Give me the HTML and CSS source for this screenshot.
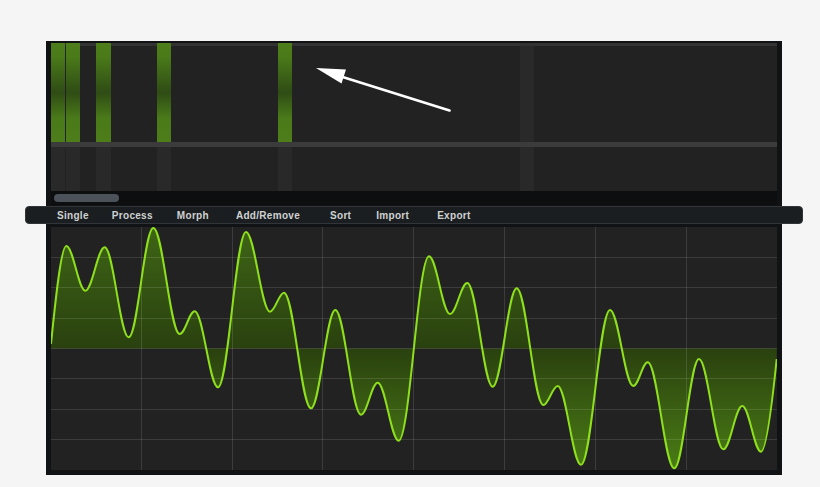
FILE: index.html
```html
<!DOCTYPE html>
<html>
<head>
<meta charset="utf-8">
<link rel="stylesheet" href="styles.css">
</head>
<body>
<div class="panel">
  <div class="harmonics">
    <div class="bar k1"></div>
    <div class="bar k2"></div>
    <div class="bar k4"></div>
    <div class="bar k8"></div>
    <div class="bar k16"></div>
    <div class="ghost k32"></div>
    <div class="sep"></div>
    <div class="cell k1"></div>
    <div class="cell k2"></div>
    <div class="cell k4"></div>
    <div class="cell k8"></div>
    <div class="cell k16"></div>
    <div class="cell k32"></div>
  </div>
  <div class="scroll"><div class="thumb"></div></div>
  <nav class="toolbar">
    <span class="tb-single">Single</span>
    <span class="tb-process">Process</span>
    <span class="tb-morph">Morph</span>
    <span class="tb-add">Add/Remove</span>
    <span class="tb-sort">Sort</span>
    <span class="tb-import">Import</span>
    <span class="tb-export">Export</span>
  </nav>
  <div class="wave">
    <svg width="726" height="243" viewBox="51 227 726 243">
      <defs>
        <linearGradient id="wfill" gradientUnits="userSpaceOnUse" x1="0" y1="227" x2="0" y2="470">
          <stop offset="0" stop-color="#3e6516"/>
          <stop offset="0.5" stop-color="#2a410f"/>
          <stop offset="1" stop-color="#4a7d15"/>
        </linearGradient>
      </defs>
      <path class="fill" d="M51 344 C54.5 310 60.7 246 66.3 246 C73.2 246 78.4 290.7 85.3 290.7 C92.4 290.7 97.6 247.3 104.7 247.3 C113.4 247.3 120 337.3 128.7 337.3 C137.7 337.3 144.3 228 153.3 228 C162.9 228 170.1 334 179.7 334 C185.2 334 189.2 311.3 194.7 311.3 C203.2 311.3 209.5 387.3 218 387.3 C228.2 387.3 235.8 232 246 232 C254.7 232 261.3 311.7 270 311.7 C275.1 311.7 278.9 292.7 284 292.7 C293.8 292.7 301.2 408.3 311 408.3 C319.8 408.3 326.5 310 335.3 310 C344.7 310 351.6 414.7 361 414.7 C367.1 414.7 371.6 382.7 377.7 382.7 C385.3 382.7 391.1 440.7 398.7 440.7 C409.7 440.7 418 256.3 429 256.3 C436.6 256.3 442.4 314 450 314 C456.3 314 461 283 467.3 283 C476.5 283 483.5 386.7 492.7 386.7 C501.4 386.7 508 288.3 516.7 288.3 C526.4 288.3 533.6 405 543.3 405 C548.5 405 552.5 386 557.7 386 C566.2 386 572.5 464.7 581 464.7 C591.6 464.7 599.4 310 610 310 C618.5 310 624.8 386 633.3 386 C638.5 386 642.5 362.3 647.7 362.3 C657.4 362.3 664.6 468.3 674.3 468.3 C683.3 468.3 690 359 699 359 C707.8 359 714.5 449.3 723.3 449.3 C730.2 449.3 735.4 406 742.3 406 C749.1 406 754.2 451.7 761 451.7 C766.7 451.7 773 395 776.7 359 L776.7 348.5 L51 348.5 Z"/>
      <g class="grid">
        <line x1="141.5" y1="227" x2="141.5" y2="470"/>
        <line x1="232.5" y1="227" x2="232.5" y2="470"/>
        <line x1="322.5" y1="227" x2="322.5" y2="470"/>
        <line x1="413.5" y1="227" x2="413.5" y2="470"/>
        <line x1="504.5" y1="227" x2="504.5" y2="470"/>
        <line x1="595.5" y1="227" x2="595.5" y2="470"/>
        <line x1="686.5" y1="227" x2="686.5" y2="470"/>
        <line x1="51" y1="257.5" x2="777" y2="257.5"/>
        <line x1="51" y1="287.5" x2="777" y2="287.5"/>
        <line x1="51" y1="318.5" x2="777" y2="318.5"/>
        <line x1="51" y1="348.5" x2="777" y2="348.5"/>
        <line x1="51" y1="378.5" x2="777" y2="378.5"/>
        <line x1="51" y1="409.5" x2="777" y2="409.5"/>
        <line x1="51" y1="439.5" x2="777" y2="439.5"/>
      </g>
      <path class="line" d="M51 344 C54.5 310 60.7 246 66.3 246 C73.2 246 78.4 290.7 85.3 290.7 C92.4 290.7 97.6 247.3 104.7 247.3 C113.4 247.3 120 337.3 128.7 337.3 C137.7 337.3 144.3 228 153.3 228 C162.9 228 170.1 334 179.7 334 C185.2 334 189.2 311.3 194.7 311.3 C203.2 311.3 209.5 387.3 218 387.3 C228.2 387.3 235.8 232 246 232 C254.7 232 261.3 311.7 270 311.7 C275.1 311.7 278.9 292.7 284 292.7 C293.8 292.7 301.2 408.3 311 408.3 C319.8 408.3 326.5 310 335.3 310 C344.7 310 351.6 414.7 361 414.7 C367.1 414.7 371.6 382.7 377.7 382.7 C385.3 382.7 391.1 440.7 398.7 440.7 C409.7 440.7 418 256.3 429 256.3 C436.6 256.3 442.4 314 450 314 C456.3 314 461 283 467.3 283 C476.5 283 483.5 386.7 492.7 386.7 C501.4 386.7 508 288.3 516.7 288.3 C526.4 288.3 533.6 405 543.3 405 C548.5 405 552.5 386 557.7 386 C566.2 386 572.5 464.7 581 464.7 C591.6 464.7 599.4 310 610 310 C618.5 310 624.8 386 633.3 386 C638.5 386 642.5 362.3 647.7 362.3 C657.4 362.3 664.6 468.3 674.3 468.3 C683.3 468.3 690 359 699 359 C707.8 359 714.5 449.3 723.3 449.3 C730.2 449.3 735.4 406 742.3 406 C749.1 406 754.2 451.7 761 451.7 C766.7 451.7 773 395 776.7 359"/>
    </svg>
  </div>
  <svg class="arrow" width="736" height="434" viewBox="46 41 736 434">
    <line x1="341" y1="76.5" x2="449.5" y2="110.5"/>
    <polygon points="316,68 346,69.5 341.5,83.5"/>
  </svg>
</div>
</body>
</html>
```
FILE: styles.css
```css
html, body {
  margin: 0;
  padding: 0;
}
body {
  background: #f5f5f5;
  width: 820px;
  height: 487px;
  overflow: hidden;
  font-family: "Liberation Sans", Arial, sans-serif;
}
.panel {
  position: relative;
  box-sizing: border-box;
  width: 736px;
  margin: 41px 0 0 46px;
  padding: 2px 5px 5px;
  background: #111214;
  display: flex;
  flex-direction: column;
}
.harmonics {
  display: grid;
  grid-template-columns: repeat(48, 1fr);
  grid-template-rows: 99px 5px 44px;
  background: linear-gradient(#333333 0 3px, #222222 3px);
}
.k1 { grid-column: 1; }
.k2 { grid-column: 2; }
.k4 { grid-column: 4; }
.k8 { grid-column: 8; }
.k16 { grid-column: 16; }
.k32 { grid-column: 32; }
.bar {
  grid-row: 1;
  margin-right: 1px;
  background: linear-gradient(to bottom, #4d7e1a 0%, #4a7a19 14%, #2f4c15 50%, #4a7a19 76%, #4d7e1a 100%);
}
.ghost {
  grid-row: 1;
  margin-top: 3px;
  margin-right: 1px;
  background: #292929;
}
.sep {
  grid-row: 2;
  grid-column: 1 / -1;
  background: #3b3b3b;
}
.cell {
  grid-row: 3;
  margin-right: 1px;
  background: #292929;
}
.scroll {
  height: 14px;
  background: #0d0e10;
  display: flex;
  align-items: flex-start;
}
.thumb {
  width: 65px;
  height: 8px;
  margin: 3px 0 0 3px;
  border-radius: 4px;
  background: #4b525a;
}
.toolbar {
  margin: 1px -26px 0;
  height: 18px;
  box-sizing: border-box;
  border: 1px solid #313438;
  border-radius: 4px;
  background: #1b1e21;
  display: flex;
  align-items: center;
  padding-left: 31px;
  font-weight: bold;
  font-size: 10px;
  letter-spacing: 0.3px;
  color: #cfd1d1;
}
.tb-process { margin-left: 23px; }
.tb-morph { margin-left: 24px; }
.tb-add { margin-left: 27px; }
.tb-sort { margin-left: 30px; }
.tb-import { margin-left: 25px; }
.tb-export { margin-left: 28px; }
.wave {
  margin-top: 3px;
  height: 243px;
  background: #222222;
}
.wave svg {
  display: block;
}
.fill {
  fill: url(#wfill);
}
.grid line {
  stroke: rgba(255, 255, 255, 0.12);
  stroke-width: 1;
}
.line {
  fill: none;
  stroke: #8fe01c;
  stroke-width: 2;
}
.arrow {
  position: absolute;
  left: 0;
  top: 0;
  pointer-events: none;
}
.arrow line {
  stroke: #ffffff;
  stroke-width: 2.6;
  stroke-linecap: round;
}
.arrow polygon {
  fill: #ffffff;
}
```
